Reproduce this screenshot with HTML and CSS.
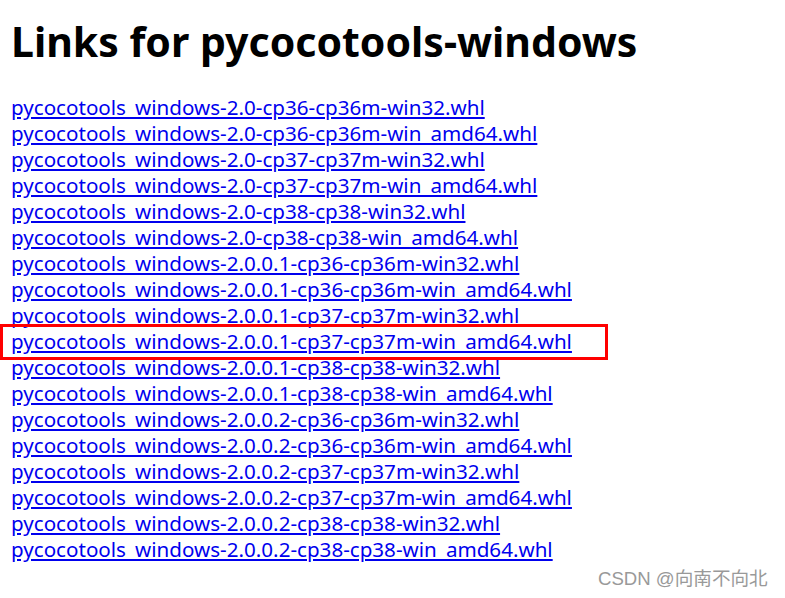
FILE: index.html
```html
<!DOCTYPE html>
<html>
<head>
<meta charset="utf-8">
<title>Links for pycocotools-windows</title>
<link rel="stylesheet" href="styles.css">
</head>
<body>
<h1 class="title">Links for pycocotools-windows</h1>
<div class="links">
<a href="#">pycocotools_windows-2.0-cp36-cp36m-win32.whl</a>
<a href="#">pycocotools_windows-2.0-cp36-cp36m-win_amd64.whl</a>
<a href="#">pycocotools_windows-2.0-cp37-cp37m-win32.whl</a>
<a href="#">pycocotools_windows-2.0-cp37-cp37m-win_amd64.whl</a>
<a href="#">pycocotools_windows-2.0-cp38-cp38-win32.whl</a>
<a href="#">pycocotools_windows-2.0-cp38-cp38-win_amd64.whl</a>
<a href="#">pycocotools_windows-2.0.0.1-cp36-cp36m-win32.whl</a>
<a href="#">pycocotools_windows-2.0.0.1-cp36-cp36m-win_amd64.whl</a>
<a href="#">pycocotools_windows-2.0.0.1-cp37-cp37m-win32.whl</a>
<a href="#" class="marked">pycocotools_windows-2.0.0.1-cp37-cp37m-win_amd64.whl</a>
<a href="#">pycocotools_windows-2.0.0.1-cp38-cp38-win32.whl</a>
<a href="#">pycocotools_windows-2.0.0.1-cp38-cp38-win_amd64.whl</a>
<a href="#">pycocotools_windows-2.0.0.2-cp36-cp36m-win32.whl</a>
<a href="#">pycocotools_windows-2.0.0.2-cp36-cp36m-win_amd64.whl</a>
<a href="#">pycocotools_windows-2.0.0.2-cp37-cp37m-win32.whl</a>
<a href="#">pycocotools_windows-2.0.0.2-cp37-cp37m-win_amd64.whl</a>
<a href="#">pycocotools_windows-2.0.0.2-cp38-cp38-win32.whl</a>
<a href="#">pycocotools_windows-2.0.0.2-cp38-cp38-win_amd64.whl</a>
</div>
<div class="watermark">CSDN @向南不向北</div>
</body>
</html>
```
FILE: styles.css
```css
html, body {
  margin: 0;
  padding: 0;
  background: #ffffff;
}
body {
  position: relative;
  width: 785px;
  height: 598px;
  overflow: hidden;
  font-family: "Noto Sans", "Noto Sans CJK SC", sans-serif;
}
.title {
  margin: 0;
  padding: 15px 0 0 11px;
  font-size: 41px;
  line-height: 52px;
  font-weight: 700;
  color: #000;
}
.links {
  display: flex;
  flex-direction: column;
  align-items: flex-start;
  padding: 27px 0 0 11px;
}
.links a {
  font-size: 20.6px;
  line-height: 26px;
  color: #0000ee;
  text-decoration: underline;
}
.links a.marked {
  position: relative;
}
.links a.marked::after {
  content: "";
  position: absolute;
  left: -11px;
  right: -36px;
  top: -4px;
  bottom: -6px;
  border: 3px solid #ff0000;
}
.watermark {
  position: absolute;
  left: 598px;
  bottom: 8px;
  font-size: 18.6px;
  color: #999999;
  font-family: "Liberation Sans", "Noto Sans CJK SC", sans-serif;
  white-space: nowrap;
}
```
